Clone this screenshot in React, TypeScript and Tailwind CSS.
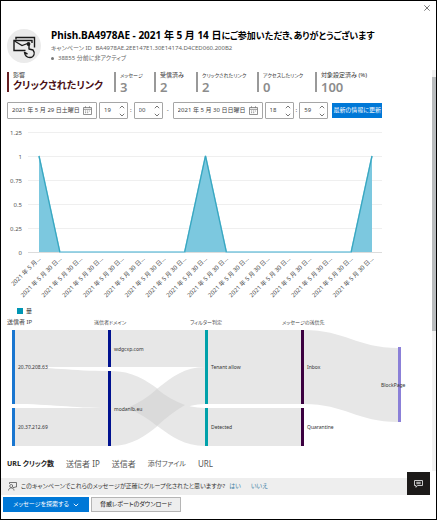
import React from "react";

const STATS = [
  { label: "メッセージ", value: "3", width: "w-[40px]", size: "text-[5px]" },
  { label: "受信済み", value: "2", width: "w-[42px]", size: "text-[6px]" },
  { label: "クリックされたリンク", value: "2", width: "w-[61px]", size: "text-[5px]" },
  { label: "アクセスしたリンク", value: "0", width: "w-[58px]", size: "text-[5px]" },
  { label: "対象設定済み (%)", value: "100", width: "w-[60px]", size: "text-[6px]" },
];

const TICKS = ["1.25", "1", "0.75", "0.5", "0.25", "0"];
const POINTS = [1, 0, 0, 0, 0, 0, 0, 0, 1, 0, 0, 0, 0, 0, 0, 0, 1];
const pointX = (i: number) => 38 + (i * 333) / 16;
const pointY = (v: number) => 125 - v * 96;

function CampaignIcon() {
  return (
    <svg viewBox="0 0 34 34" className="size-[34px] shrink-0" aria-hidden="true">
      <circle cx="17" cy="17" r="17" fill="#ebebeb" />
      <g fill="none" stroke="#1a1a1a" strokeWidth="1.4">
        <path d="M9 10.500V8.500H27.500V18.500" />
        <path d="M18.500 21.500H7V11.500H25V14" />
        <path d="M7.500 12L15 16.500L20.500 14.500" strokeWidth="1.2" />
        <path d="M22 15.500V20L26 21C28.500 24 27 28.500 23 28.500C20.200 28.500 18 26.500 17.500 23.500L20.500 25" strokeLinejoin="round" />
      </g>
      <circle cx="21.500" cy="15" r="1.900" fill="#1a1a1a" />
    </svg>
  );
}

function CalendarIcon() {
  return (
    <svg viewBox="0 0 9 9" className="size-[9px] shrink-0" fill="none" stroke="#777" strokeWidth="0.8" aria-hidden="true">
      <path d="M0.500 1.500H8.500V8.500H0.500ZM0.500 3.300H8.500M2.500 0.300V2M6.500 0.300V2" />
      <path d="M2 5H7M2 6.700H6" strokeDasharray="1 0.900" />
    </svg>
  );
}

function Chevron({ up = false, className = "" }: { up?: boolean; className?: string }) {
  return (
    <svg viewBox="0 0 6 4" className={`h-[4px] w-[6px] ${className}`} fill="none" stroke="currentColor" strokeWidth="0.9" aria-hidden="true">
      <path d={up ? "M0.800 3.200L3 1L5.200 3.200" : "M0.800 0.800L3 3L5.200 0.800"} />
    </svg>
  );
}

function DateField({ label, value }: { label: string; value: string }) {
  return (
    <div className="flex h-[17px] w-[90px] items-center rounded-[1px] border border-[#a6a6a6] pr-1 pl-1">
      <input aria-label={label} defaultValue={value} className="w-0 min-w-0 flex-1 text-[6px] text-[#444] outline-none" />
      <CalendarIcon />
    </div>
  );
}

function SpinField({ label, value }: { label: string; value: string }) {
  return (
    <div className="flex h-[17px] w-[29px] items-center rounded-[1px] border border-[#a6a6a6] pr-[2px] pl-1">
      <input aria-label={label} defaultValue={value} className="w-0 min-w-0 flex-1 text-[6px] text-[#444] outline-none" />
      <div className="flex flex-col gap-[4px] text-[#666]">
        <button type="button" aria-label="増やす"><Chevron up className="block" /></button>
        <button type="button" aria-label="減らす"><Chevron className="block" /></button>
      </div>
    </div>
  );
}

function ClicksChart() {
  const line = POINTS.map((v, i) => `${i ? "L" : "M"}${pointX(i)} ${pointY(v)}`).join("");
  return (
    <svg viewBox="0 0 431 176" className="block w-full" role="img" aria-label="リンクのクリック数">
      {TICKS.map((t, i) => (
        <g key={t}>
          <path d={`M27 ${5.5 + i * 24}H381`} stroke={i === 5 ? "#dcdcdc" : "#efefef"} />
          <text x="21" y={8 + i * 24} textAnchor="end" className="fill-[#555] text-[6px]">{t}</text>
        </g>
      ))}
      <path d={`${line}V125H38Z`} fill="#7cc8df" />
      <path d={line} fill="none" stroke="#7cc8df" strokeWidth="1.500" />
      <path
        d={`M38 29L${pointX(1)} 125M${pointX(7)} 125L${pointX(8)} 29L${pointX(9)} 125M${pointX(15)} 125L${pointX(16)} 29`}
        fill="none"
        stroke="#38a7c0"
        strokeWidth="1.200"
      />
      {POINTS.map((_, i) => (
        <text
          key={i}
          textAnchor="end"
          transform={`translate(${pointX(i) + 2} 132) rotate(-45)`}
          className="fill-[#444] text-[6px]"
        >
          {i === 0 ? "2021 年 5 月..." : "2021 年 5 月 30 日..."}
        </text>
      ))}
    </svg>
  );
}

function FlowChart() {
  return (
    <svg viewBox="0 0 431 134" className="block w-full" role="img" aria-label="キャンペーン フロー">
      <g className="fill-[#444] text-[5px]">
        <text x="6" y="7" className="text-[6px]">送信者 IP</text>
        <text x="93" y="7">送信者ドメイン</text>
        <text x="189" y="7">フィルター判定</text>
        <text x="281" y="7">メッセージの送信先</text>
      </g>
      <g fill="#e7e7e7">
        <path d="M14 13H108V50H14Z" />
        <path d="M14 50C50 50 70 54 108 54V91C70 91 50 87 14 87Z" />
        <path d="M14 91H108V129H14Z" />
        <path d="M110 13H204V50H110Z" />
        <path d="M110 54C153 54 163 91 204 91V129C163 129 153 91 110 91Z" />
        <path d="M110 91C153 91 163 50 204 50V87C163 87 153 129 110 129Z" />
        <path d="M207 13H300V87H207ZM207 91H300V129H207Z" />
        <path d="M303 13C344 13 356 31 397 31V105C356 105 344 87 303 87Z" />
      </g>
      <path d="M156 72Q168 82 184 88Q170 96 156 109Q143 98 126 91Q143 84 156 72Z" fill="#dadada" />
      <path d="M11 13h3v74h-3zM11 91h3v38h-3z" fill="#1976d0" />
      <path d="M107 13h3v37h-3zM107 54h3v75h-3z" fill="#00118f" />
      <path d="M204 13h3v74h-3zM204 91h3v38h-3z" fill="#00a1aa" />
      <path d="M300 13h3v74h-3zM300 91h3v38h-3z" fill="#3b0040" />
      <path d="M397 30h3v75h-3z" fill="#8b80d8" />
      <g className="fill-[#333] text-[5px]">
        <text x="17" y="52">20.70.208.63</text>
        <text x="17" y="112">20.37.212.69</text>
        <text x="113" y="34">wdgcxp.com</text>
        <text x="113" y="94">modanlb.eu</text>
        <text x="210" y="52">Tenant allow</text>
        <text x="210" y="112">Detected</text>
        <text x="306" y="52">Inbox</text>
        <text x="306" y="112">Quarantine</text>
        <text x="380" y="70">BlockPage</text>
      </g>
    </svg>
  );
}

export default function App() {
  return (
    <div lang="ja" className="relative flex min-h-screen flex-col border border-black bg-white font-['Noto_Sans','Noto_Sans_CJK_JP',sans-serif] text-[#333] [font-feature-settings:'palt']">
      <header className="flex h-[69px] items-start justify-between pr-[6px] pl-[6px]">
        <div className="flex gap-[10px] pt-[28px]">
          <CampaignIcon />
          <div className="whitespace-nowrap text-[#666]">
            <h1 className="text-[10px] leading-[12px] font-bold text-black">
              Phish.BA4978AE - 2021 年 5 月 14 日<span className="text-[9px]">にご参加いただき、ありがとうございます</span>
            </h1>
            <p className="text-[6px] leading-[12px]">
              <span className="mr-[2px]">キャンペーン ID</span> BA4978AE.2EE147E1.30E14174.D4CED060.200B2
            </p>
            <p className="flex items-center gap-1 text-[6px] leading-[8px]">
              <span className="size-[3px] rounded-full bg-[#777]" />
              38855 分前に非アクティブ
            </p>
          </div>
        </div>
        <button type="button" aria-label="閉じる" className="pt-[4px]">
          <svg viewBox="0 0 6 6" className="block size-[6px]" stroke="#555" strokeWidth="0.800" aria-hidden="true">
            <path d="M0.300 0.300L5.700 5.700M5.700 0.300L0.300 5.700" />
          </svg>
        </button>
      </header>

      <div className="flex">
        <main className="min-w-0 flex-1">
          <section className="flex h-[32px] items-start pt-[2px] pl-[6px] whitespace-nowrap">
            <div className="flex h-[20px] w-[107px] gap-[4px]">
              <span className="w-[2px] bg-[#651d21]" />
              <div>
                <div className="text-[6px] leading-[6px]">影響</div>
                <div className="text-[10px] leading-[14px] font-bold text-[#4b1015]">クリックされたリンク</div>
              </div>
            </div>
            {STATS.map((s) => (
              <div key={s.label} className={`flex h-[20px] gap-[4px] ${s.width}`}>
                <span className="w-[2px] shrink-0 bg-[#999]" />
                <div>
                  <div className={`leading-[6px] ${s.size}`}>{s.label}</div>
                  <div className="text-[13px] leading-[18px] font-semibold text-[#8c8c8c]">{s.value}</div>
                </div>
              </div>
            ))}
          </section>

          <form className="flex items-center gap-[2px] pl-[6px] text-[6px]">
            <DateField label="開始日" value="2021 年 5 月 29 日土曜日" />
            <SpinField label="開始時" value="19" />
            <span>:</span>
            <SpinField label="開始分" value="00" />
            <span className="w-[6px] text-center">-</span>
            <DateField label="終了日" value="2021 年 5 月 30 日日曜日" />
            <SpinField label="終了時" value="18" />
            <span>:</span>
            <SpinField label="終了分" value="59" />
            <button type="button" className="ml-[2px] h-[15px] w-[50px] bg-[#0078d7] text-[6px] whitespace-nowrap text-white">
              最新の情報に更新
            </button>
          </form>

          <div className="pt-[8px]">
            <ClicksChart />
          </div>
          <div className="flex h-[14px] items-center gap-[3px] pt-[2px] pl-[16px] text-[6px]">
            <span className="size-[6px] bg-[#0096b4]" />
            量
          </div>
          <FlowChart />

          <nav className="flex h-[20px] items-center gap-[12px] pt-[6px] pl-[6px] text-[8px] whitespace-nowrap text-[#555]">
            <a href="#clicks" className="text-[7px] font-bold text-[#222]">URL クリック数</a>
            <a href="#ip">送信者 IP</a>
            <a href="#sender">送信者</a>
            <a href="#attachments" className="text-[7px]">添付ファイル</a>
            <a href="#url">URL</a>
          </nav>
        </main>

        <div className="flex w-[4px] flex-col bg-[#f1f1f1] pt-[7px]" aria-hidden="true">
          <div className="h-[254px] bg-[#b9bcbe]" />
        </div>
      </div>

      <div className="mt-auto mr-[6px] flex h-[17px] items-center gap-[4px] bg-[#eeeeee] pl-[7px] text-[6px] whitespace-nowrap">
        <svg viewBox="0 0 9 9" className="size-[9px]" fill="none" stroke="#555" strokeWidth="0.800" aria-hidden="true">
          <circle cx="3.200" cy="4" r="1.500" />
          <path d="M0.500 8.500C0.700 5 5.700 5 6 8.500M1.500 2V0.500H8.500V5H7L5.500 6V5" />
        </svg>
        <span>このキャンペーンでこれらのメッセージが正確にグループ化されたと思いますか?</span>
        <a href="#yes" className="text-[#3d7fa5]">はい</a>
        <a href="#no" className="ml-[6px] text-[#3d7fa5]">いいえ</a>
      </div>
      <footer className="flex h-[24px] items-start gap-[2px] pt-[2px] pl-[2px] text-[6px] whitespace-nowrap">
        <button type="button" className="flex h-[15px] w-[86px] items-center justify-center gap-[4px] bg-[#0078d7] text-white">
          メッセージを探索する
          <Chevron />
        </button>
        <button type="button" className="h-[15px] w-[90px] border border-[#b5b5b5] bg-[#eeeeee] text-[#222]">
          脅威レポートのダウンロード
        </button>
      </footer>

      <button type="button" aria-label="フィードバック" className="absolute right-[6px] bottom-[24px] flex size-[23px] items-center justify-center bg-[#1c1a19]">
        <svg viewBox="0 0 9 8" className="h-[8px] w-[9px]" fill="none" stroke="#ddd" strokeWidth="0.900" aria-hidden="true">
          <path d="M0.500 0.500H8.500V5.500H3.500L2 7.300V5.500H0.500ZM2.300 2.300H6.700M2.300 3.700H6.700" />
        </svg>
      </button>
    </div>
  );
}
